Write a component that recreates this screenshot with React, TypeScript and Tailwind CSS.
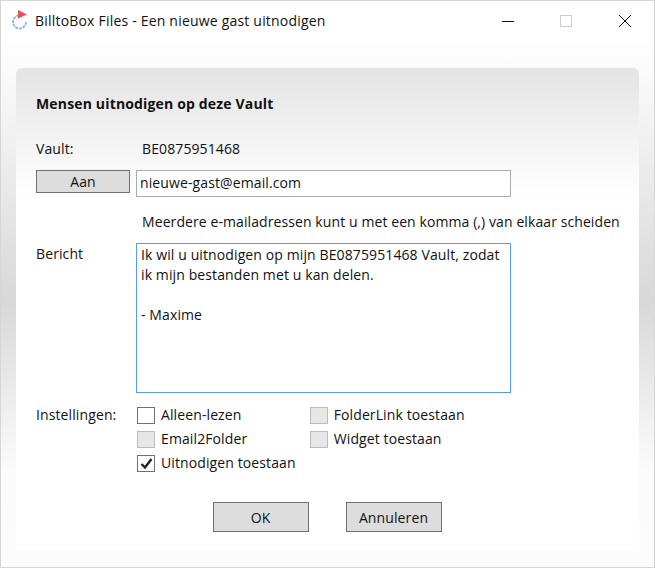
const font = "font-['Open_Sans',sans-serif]";

function CheckBox({ label, state }: { label: string; state?: "off" | "disabled" | "on" }) {
  return (
    <div className="flex h-6 items-center gap-[6px]">
      <span
        className={
          state === "disabled"
            ? "flex h-[17px] w-[18px] items-center justify-center border border-[#bcbcbc] bg-[#e6e6e6]"
            : "flex h-[17px] w-[18px] items-center justify-center border border-[#707070] bg-white"
        }
      >
        {state === "on" && (
          <svg width="13" height="13" viewBox="0 0 13 13">
            <path d="M1.5 7 L5 10.5 L11.5 2" fill="none" stroke="#222" strokeWidth="2.4" />
          </svg>
        )}
      </span>
      <span className="text-[14px] leading-none text-[#111]">{label}</span>
    </div>
  );
}

export default function App() {
  return (
    <div className={`${font} flex h-[568px] w-[655px] flex-col border border-[#d6d6d6] bg-[linear-gradient(#ffffff_7%,#d8d8d8_53%,#fbfbfb_83%,#fcfcfc)] text-[14px] tracking-[0.11px] text-[#111]`}>
      {/* Title bar */}
      <div className="flex h-[39px] items-center bg-white pl-[10px]">
        <svg width="18" height="22" viewBox="0 0 18 22" className="mr-[6px]">
          <path d="M15 12 A6.5 6.5 0 1 1 8.5 5.5" fill="none" stroke="#8fb8de" strokeWidth="1.8" strokeDasharray="3 0.8" />
          <path d="M7 0 L16 4.5 L7 8.5 Z" fill="#e8505b" />
        </svg>
        <span className="text-[14px] tracking-[0.2px]">BilltoBox Files - Een nieuwe gast uitnodigen</span>
        <div className="ml-auto flex items-center">
          <svg width="58" height="14" viewBox="0 0 58 14">
            <path d="M23 7.5 H35" stroke="#111" />
          </svg>
          <svg width="58" height="14" viewBox="0 0 58 14">
            <rect x="23.5" y="1.5" width="11" height="11" fill="none" stroke="#cccccc" />
          </svg>
          <svg width="59" height="14" viewBox="0 0 59 14">
            <path d="M24 1 L36 13 M36 1 L24 13" stroke="#111" />
          </svg>
        </div>
      </div>

      {/* Main panel */}
      <div className="mx-[15px] mt-7 flex h-[482px] flex-col rounded-t-md bg-[linear-gradient(#e4e4e4,#ffffff_27%)] px-5">
        <h1 className="mt-[26px] text-[14px] font-bold leading-5 tracking-[0.16px]">Mensen uitnodigen op deze Vault</h1>

        <div className="mt-6 flex h-5 items-center">
          <span className="w-[106px]">Vault:</span>
          <span>BE0875951468</span>
        </div>

        <div className="mt-3 flex items-start gap-[6px]">
          <button className="h-[23px] w-[94px] border border-[#707070] bg-[#dddddd] pt-[1px] text-[14px] leading-none">Aan</button>
          <input
            readOnly
            value="nieuwe-gast@email.com"
            className="h-[27px] w-[375px] border border-[#ababab] bg-white px-[3px] pb-[2px] text-[14px] outline-none"
          />
        </div>

        <p className="mt-[15px] h-5 whitespace-nowrap pl-[106px] leading-5 tracking-[0.09px]">Meerdere e-mailadressen kunt u met een komma (,) van elkaar scheiden</p>

        <div className="mt-[11px] flex items-start">
          <span className="w-[100px] pt-[1px] leading-5">Bericht</span>
          <div className="h-[150px] w-[375px] border border-[#569de5] bg-white px-[4px] pt-[1px] leading-5">
            <p>Ik wil u uitnodigen op mijn BE0875951468 Vault, zodat</p>
            <p>ik mijn bestanden met u kan delen.</p>
            <p className="mt-5">- Maxime</p>
          </div>
        </div>

        <div className="mt-[10px] flex items-start">
          <span className="w-[101px] pt-[2px] leading-5">Instellingen:</span>
          <div className="flex flex-col">
            <CheckBox label="Alleen-lezen" state="off" />
            <CheckBox label="Email2Folder" state="disabled" />
            <CheckBox label="Uitnodigen toestaan" state="on" />
          </div>
          <div className="ml-[14px] flex flex-col">
            <CheckBox label="FolderLink toestaan" state="disabled" />
            <CheckBox label="Widget toestaan" state="disabled" />
          </div>
        </div>

        <div className="mt-[27px] flex justify-center gap-[37px] pr-[1px]">
          <button className="h-[30px] w-[96px] border border-[#707070] bg-[#dddddd] text-[14px]">OK</button>
          <button className="h-[30px] w-[96px] border border-[#707070] bg-[#dddddd] text-[14px]">Annuleren</button>
        </div>
      </div>
    </div>
  );
}
